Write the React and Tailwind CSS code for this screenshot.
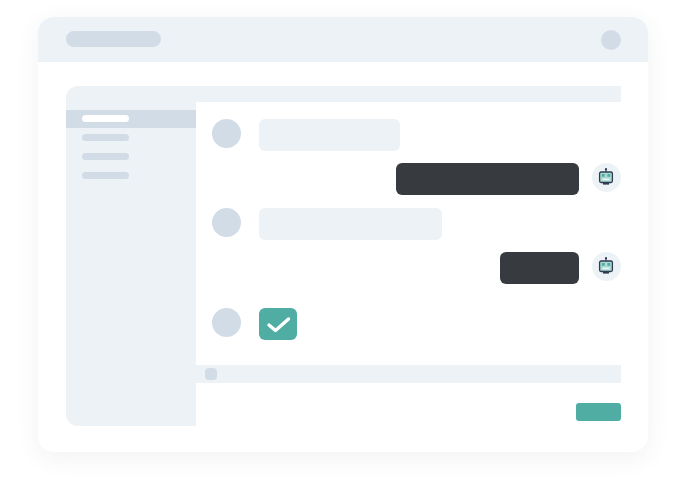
const BotIcon = () => (
  <div className="w-[29px] h-[29px] rounded-full bg-[#edf2f6] flex items-center justify-center">
    <svg width="16" height="19" viewBox="0 0 16 19" fill="none">
      <circle cx="8" cy="1.2" r="1.1" fill="#2f3b52" />
      <rect x="7.4" y="1.2" width="1.2" height="3" fill="#2f3b52" />
      <rect x="1.6" y="4" width="12.8" height="10.5" rx="1.5" fill="#a9dad1" stroke="#2f3b52" strokeWidth="1.3" />
      <rect x="3.8" y="6" width="2.8" height="2.8" fill="#4fada3" />
      <rect x="9.4" y="6" width="2.8" height="2.8" fill="#4fada3" />
      <rect x="4.5" y="10.6" width="7" height="1.6" fill="#edf7f5" />
      <rect x="5" y="15" width="6" height="1.6" fill="#2f3b52" />
    </svg>
  </div>
);

const Avatar = () => <div className="w-[29px] h-[29px] rounded-full bg-[#d2dce6] shrink-0" />;

export default function App() {
  return (
    <div className="w-[685px] h-[486px] bg-white pt-[17px] pl-[38px] overflow-hidden">
      <div className="w-[610px] h-[435px] bg-white rounded-2xl shadow-[0_6px_24px_rgba(60,70,70,0.07)] overflow-hidden">
        {/* window header */}
        <div className="h-[44.5px] bg-[#edf2f6] flex items-start justify-between pl-7 pr-[27px]">
          <div className="w-[95px] h-4 mt-[14px] rounded-lg bg-[#d2dce6]" />
          <div className="w-5 h-5 mt-[13px] rounded-full bg-[#d2dce6]" />
        </div>

        <div className="flex mt-[24.5px] ml-7 w-[554.5px] h-[340px]">
          {/* sidebar */}
          <div className="w-[130px] bg-[#edf2f6] rounded-l-xl pt-[23.5px]">
            <div className="h-[18px] bg-[#d2dce6] flex items-center pl-4">
              <div className="w-[47px] h-[7px] rounded bg-white" />
            </div>
            <div className="flex flex-col gap-3 pl-4 pt-[6.5px]">
              <div className="w-[47px] h-[7px] rounded bg-[#d2dce6]" />
              <div className="w-[47px] h-[7px] rounded bg-[#d2dce6]" />
              <div className="w-[47px] h-[7px] rounded bg-[#d2dce6]" />
            </div>
          </div>

          {/* chat */}
          <div className="flex-1 flex flex-col">
            <div className="h-4 bg-[#edf2f6]" />
            <div className="h-[263px] pt-[17px] pl-4">
              <div className="flex gap-[18px]">
                <Avatar />
                <div className="w-[140.5px] h-8 rounded-md bg-[#edf2f6]" />
              </div>
              <div className="flex justify-end gap-[12.5px] mt-3">
                <div className="w-[183px] h-8 rounded-md bg-[#373a3e]" />
                <BotIcon />
              </div>
              <div className="flex gap-[18px] mt-[13px]">
                <Avatar />
                <div className="w-[183px] h-8 rounded-md bg-[#edf2f6]" />
              </div>
              <div className="flex justify-end gap-[12.5px] mt-3">
                <div className="w-[79px] h-8 rounded-md bg-[#373a3e]" />
                <BotIcon />
              </div>
              <div className="flex gap-[18px] mt-6">
                <Avatar />
                <div className="w-[38px] h-8 rounded-md bg-[#4fada3] flex items-center justify-center">
                  <svg width="26" height="18" viewBox="0 0 26 18" fill="none">
                    <path d="M4 10 L10.5 15.5 L23.5 4" stroke="white" strokeWidth="3.4" strokeLinecap="round" strokeLinejoin="round" />
                  </svg>
                </div>
              </div>
            </div>
            <div className="h-[18px] bg-[#edf2f6] flex items-center pl-[8.5px]">
              <div className="w-3 h-3 rounded-sm bg-[#d2dce6]" />
            </div>
            <div className="flex justify-end mt-5">
              <div className="w-[45px] h-[18px] rounded-[3px] bg-[#4fada3]" />
            </div>
          </div>
        </div>
      </div>
    </div>
  );
}
